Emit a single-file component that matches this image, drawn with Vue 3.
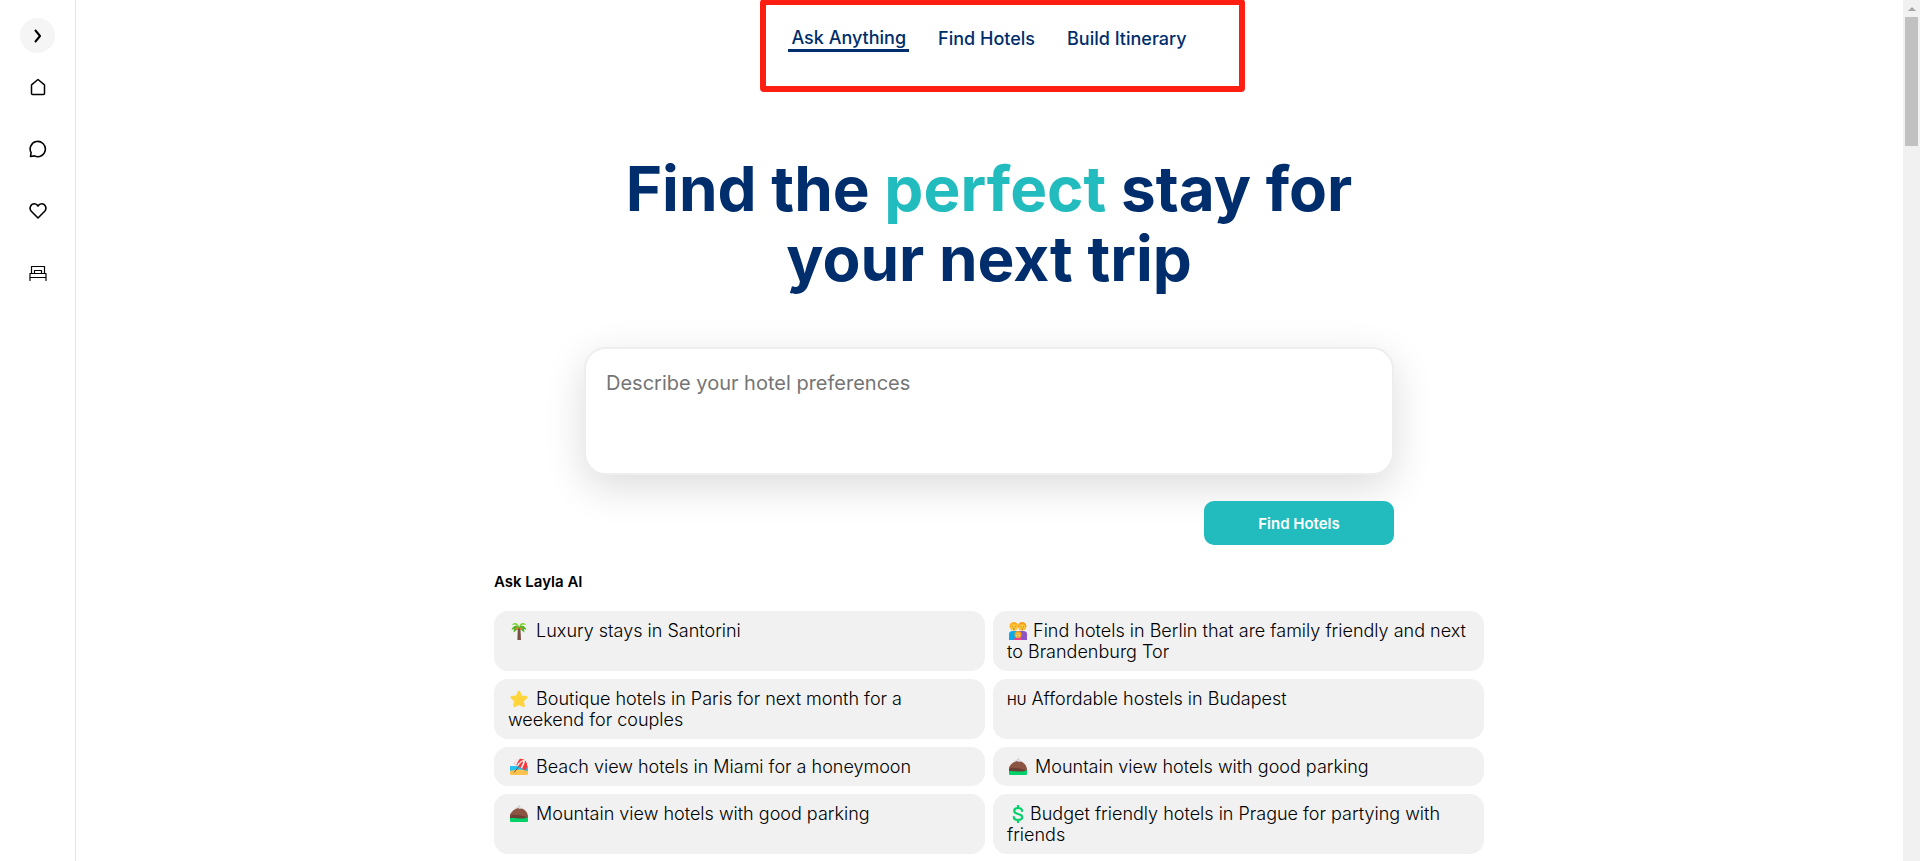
<template>
  <div class="page">
    <aside class="sidebar">
      <button class="sidebar-toggle" type="button" aria-label="Expand menu">
        <svg width="18" height="18" viewBox="0 0 18 18" fill="none" stroke="#000" stroke-width="2">
          <path d="M6.5 3.5 11 9l-4.500 5.500" stroke-linecap="round" stroke-linejoin="round" />
        </svg>
      </button>
      <nav class="sidebar-nav" aria-label="Main">
        <a v-for="item in menu" :key="item.label" href="#" :aria-label="item.label">
          <svg width="18" height="18" viewBox="0 0 18 18" fill="none" stroke="#000" :stroke-width="item.stroke">
            <path :d="item.path" stroke-linecap="round" stroke-linejoin="round" />
          </svg>
        </a>
      </nav>
    </aside>

    <main class="content">
      <nav class="tabs" aria-label="Sections">
        <a
          v-for="tab in tabs"
          :key="tab"
          href="#"
          class="tab"
          :class="{ 'tab--active': tab === activeTab }"
          @click.prevent="activeTab = tab"
        >{{ tab }}</a>
        <span class="highlight"></span>
      </nav>

      <h1 class="title">Find the <span>perfect</span> stay for your next trip</h1>

      <form class="search" @submit.prevent>
        <textarea v-model="query" aria-label="Hotel preferences" placeholder="Describe your hotel preferences"></textarea>
        <button type="submit">Find Hotels</button>
      </form>

      <section class="suggestions">
        <h2>Ask Layla AI</h2>
        <div class="suggestion-grid">
          <button
            v-for="(item, i) in suggestions"
            :key="i"
            type="button"
            class="suggestion"
            @click="query = item.text"
          >
            <span>
              <span v-if="item.icon === 'hu'" class="country">HU</span>
              <svg
                v-else
                class="emoji"
                :class="`emoji--${item.icon}`"
                :viewBox="item.icon === 'dollar' ? '2 0 14 18' : '0 0 18 18'"
                aria-hidden="true"
              >
                <g v-if="item.icon === 'palm'">
                  <path d="M7.800 6h2.600l.6 12H7.400z" fill="#795046" />
                  <path d="M9 5C7 3 3 3 1.500 8l2.500-1-.5 3.500C5 10 6.500 8 9 6c2.500 2 4 4 5.500 4.500L14 7l2.500 1C15 3 11 3 9 5z" fill="#56b327" />
                  <path d="M9 4.500C7.500.5 4 0 2 3l3-.5L9 5l4-2.500 3 .5C14 0 10.500.5 9 4.500z" fill="#7bd62b" />
                  <circle cx="7" cy="6.500" r="1.200" fill="#e87b2c" />
                  <circle cx="11" cy="6.500" r="1.200" fill="#e87b2c" />
                </g>
                <path
                  v-else-if="item.icon === 'star'"
                  d="M9 2l2.200 4.700 5 .7-3.600 3.500.9 5L9 13.500 4.500 15.900l.9-5L1.800 7.400l5-.7z"
                  fill="#ffd53e"
                  stroke="#ffd53e"
                  stroke-width="2.600"
                  stroke-linejoin="round"
                />
                <g v-else-if="item.icon === 'beach'">
                  <rect y="8" width="18" height="5" fill="#26c3ee" />
                  <path d="M0 13q9-3 18 0v3q0 1-1 1H1q-1 0-1-1z" fill="#ffc24d" />
                  <path d="M11 6 4 14.500" stroke="#795046" stroke-width="1" />
                  <path d="M4 5.500C6 0 13-1 16 3.500c2 3 1 6.500-.5 9z" fill="#fa3737" />
                  <path d="M7 7.300C9 4 12 1.500 14.500 2c1.500 1.400-.5 4.500-2.300 8.200l-1.400-.8c1.500-3 2.500-5 2.200-6.200-1.500.5-3 2.300-4.700 4.800z" fill="#f1eef2" />
                  <path d="M4 5.500C5 2.500 8 .6 10.500.6 8.500 2 7.500 4.500 6.500 6.800z" fill="#f1eef2" />
                </g>
                <g v-else-if="item.icon === 'mountain'">
                  <rect y="10.500" width="18" height="6.500" rx="1" fill="#00d26a" />
                  <path d="M0 12.500V9.500C2 6 5 3 9 3c5 0 9 4 9 9l-5 1z" fill="#8b5443" />
                  <path d="M0 11.500c2-3 4-1.500 7-1.500 5 0 7 2 11 2l-4 1.500C9 14 4 12.500 0 13z" fill="#6d4035" />
                  <path d="M5 4l5-3.500-1 3 3-.5" stroke="#cfcdd4" stroke-width="1" fill="none" />
                </g>
                <g v-else-if="item.icon === 'family'">
                  <path d="M0 18v-6q0-3 4-3h5v9z" fill="#0da8e8" />
                  <path d="M18 18v-6q0-3-4-3H9v9z" fill="#8b55c4" />
                  <circle cx="4.800" cy="4.300" r="4.200" fill="#ffad1f" />
                  <circle cx="13.200" cy="4.300" r="4.200" fill="#f5a018" />
                  <circle cx="4.800" cy="5.300" r="3.100" fill="#ffc93c" />
                  <circle cx="13.200" cy="5.300" r="3.100" fill="#ffc93c" />
                  <path d="M3.200 4.800h.9M5.700 4.800h.9M11.500 4.800h.9M14 4.800h.9M4 7h1.800M12.400 7h1.800" stroke="#8a5722" stroke-width=".8" />
                  <path d="M5 18q0-3 4-3t4 3z" fill="#f0408c" />
                  <circle cx="9" cy="12.500" r="3.500" fill="#f5a018" />
                  <circle cx="9" cy="13.200" r="2.300" fill="#ffd45a" />
                  <path d="M7.600 12.500h.8M9.700 12.500h.8M8.300 14.200h1.500" stroke="#8a5722" stroke-width=".7" />
                </g>
                <path
                  v-else
                  d="M13 6C13 3.500 11 3 9 3S5.200 4 5.200 6c0 4 8 2 8 6 0 2-2 3-4.200 3s-4.200-1-4.200-3M9 .8V3M9 15v2.200"
                  fill="none"
                  stroke="#00d26a"
                  stroke-width="2.200"
                  stroke-linecap="round"
                />
              </svg>
              {{ item.text }}
            </span>
          </button>
        </div>
      </section>
    </main>

    <div class="scrollbar" aria-hidden="true">
      <span class="scroll-arrow"></span>
      <span class="scroll-thumb"></span>
    </div>
  </div>
</template>

<script setup>
import { ref } from 'vue';

const menu = [
  { label: 'Home', stroke: 1.5, path: 'M2.500 6.800 9 1.500l6.500 5.300v8.700q0 1-1 1h-11q-1 0-1-1z' },
  { label: 'Chats', stroke: 1.6, path: 'M1.500 16.500l.6-3.800A7.600 7.600 0 1 1 5.500 15.900z' },
  { label: 'Favourites', stroke: 1.6, path: 'M9 16 2.300 9.300C-.5 6 2 1.800 5.300 1.800 7 1.800 8.300 2.700 9 4c.7-1.300 2-2.200 3.700-2.200 3.300 0 5.800 4.200 3 7.500z' },
  { label: 'Hotels', stroke: 1.2, path: 'M1 16.500V9.500h16v7M1 13.500h16M2.500 9.500v-7h13v7M5.500 9.500v-3h7v3' }
];

const tabs = ['Ask Anything', 'Find Hotels', 'Build Itinerary'];
const activeTab = ref('Ask Anything');
const query = ref('');

const suggestions = [
  { icon: 'palm', text: 'Luxury stays in Santorini' },
  { icon: 'family', text: 'Find hotels in Berlin that are family friendly and next to Brandenburg Tor' },
  { icon: 'star', text: 'Boutique hotels in Paris for next month for a weekend for couples' },
  { icon: 'hu', text: 'Affordable hostels in Budapest' },
  { icon: 'beach', text: 'Beach view hotels in Miami for a honeymoon' },
  { icon: 'mountain', text: 'Mountain view hotels with good parking' },
  { icon: 'mountain', text: 'Mountain view hotels with good parking' },
  { icon: 'dollar', text: 'Budget friendly hotels in Prague for partying with friends' }
];
</script>

<style>
body {
  margin: 0;
  background: #fff;
}
</style>

<style scoped>
.page {
  display: grid;
  grid-template-columns: 76px minmax(0, 1fr) 17px;
  min-height: 100vh;
  font-family: Inter, "Liberation Sans", sans-serif;
  color: #000;
}

.page *,
.page {
  box-sizing: border-box;
}

button {
  border: none;
  font-family: inherit;
  cursor: pointer;
}

/* Sidebar */
.sidebar {
  display: flex;
  flex-direction: column;
  align-items: center;
  padding-top: 18px;
  border-right: 1px solid #e5e5e5;
}

.sidebar-toggle {
  display: flex;
  align-items: center;
  justify-content: center;
  width: 35px;
  height: 35px;
  padding: 0;
  border-radius: 50%;
  background: #f5f5f5;
}

.sidebar-nav {
  display: flex;
  flex-direction: column;
  gap: 44px;
  margin-top: 25px;
}

.sidebar-nav a,
.sidebar-nav svg {
  display: block;
}

/* Content */
.content {
  display: flex;
  flex-direction: column;
  align-items: center;
  padding-right: 1px;
}

.tabs {
  position: relative;
  display: flex;
  align-items: flex-start;
  gap: 26px;
  padding-top: 27px;
}

.tab {
  padding: 0 3px;
  border-bottom: 3px solid transparent;
  color: #002d6b;
  font-size: 18px;
  font-weight: 500;
  line-height: 24px;
  text-decoration: none;
}

.tab--active {
  border-color: #002d6b;
  line-height: 22px;
}

.highlight {
  position: absolute;
  top: -1px;
  left: -28px;
  width: 485px;
  height: 93px;
  border: 6px solid #ff1f12;
  border-radius: 4px;
  pointer-events: none;
}

.title {
  max-width: 808px;
  margin: 100px 0 0;
  color: #002d6b;
  font-size: 62px;
  font-weight: 700;
  line-height: 70px;
  text-align: center;
}

.title span {
  color: #22bcbe;
}

.search {
  display: flex;
  flex-direction: column;
  align-items: flex-end;
  gap: 26px;
  width: 100%;
  max-width: 810px;
  margin-top: 53px;
}

.search textarea {
  width: 100%;
  height: 128px;
  padding: 22px 20px;
  border: 2px solid #eee;
  border-radius: 22px;
  background: #fff;
  box-shadow: 0 12px 40px rgba(0, 0, 0, 0.14);
  font-family: inherit;
  font-size: 20px;
  line-height: 24px;
  resize: none;
  outline: none;
}

.search textarea::placeholder {
  color: #757575;
}

.search button {
  position: relative;
  width: 190px;
  height: 44px;
  border-radius: 10px;
  background: #22bcbe;
  color: #fff;
  font-size: 15px;
  font-weight: 600;
}

.suggestions {
  width: 100%;
  max-width: 990px;
  margin-top: 27px;
}

.suggestions h2 {
  margin: 0 0 19px;
  font-size: 15px;
  font-weight: 600;
  line-height: 20px;
}

.suggestion-grid {
  display: grid;
  grid-template-columns: 1fr 1fr;
  gap: 8px;
}

.suggestion {
  display: flex;
  align-items: flex-start;
  padding: 9px 14px;
  border-radius: 14px;
  background: #f1f1f1;
  color: #000;
  font-size: 18px;
  font-weight: 300;
  line-height: 21px;
  text-align: left;
}

.emoji {
  width: 18px;
  height: 18px;
  margin: 0 3px 0 2px;
  vertical-align: -3px;
}

.emoji--family {
  margin-right: 1px;
}

.emoji--dollar {
  width: 14px;
  margin: 0 0 0 4px;
}

.country {
  font-size: 13px;
  font-weight: 400;
}

/* Scrollbar */
.scrollbar {
  display: flex;
  flex-direction: column;
  align-items: center;
  gap: 6px;
  padding-top: 7px;
  background: #f1f1f1;
}

.scroll-arrow {
  border: 4px solid transparent;
  border-top: none;
  border-bottom-color: #a3a3a3;
}

.scroll-thumb {
  width: 13px;
  height: 129px;
  background: #c1c1c1;
}
</style>
